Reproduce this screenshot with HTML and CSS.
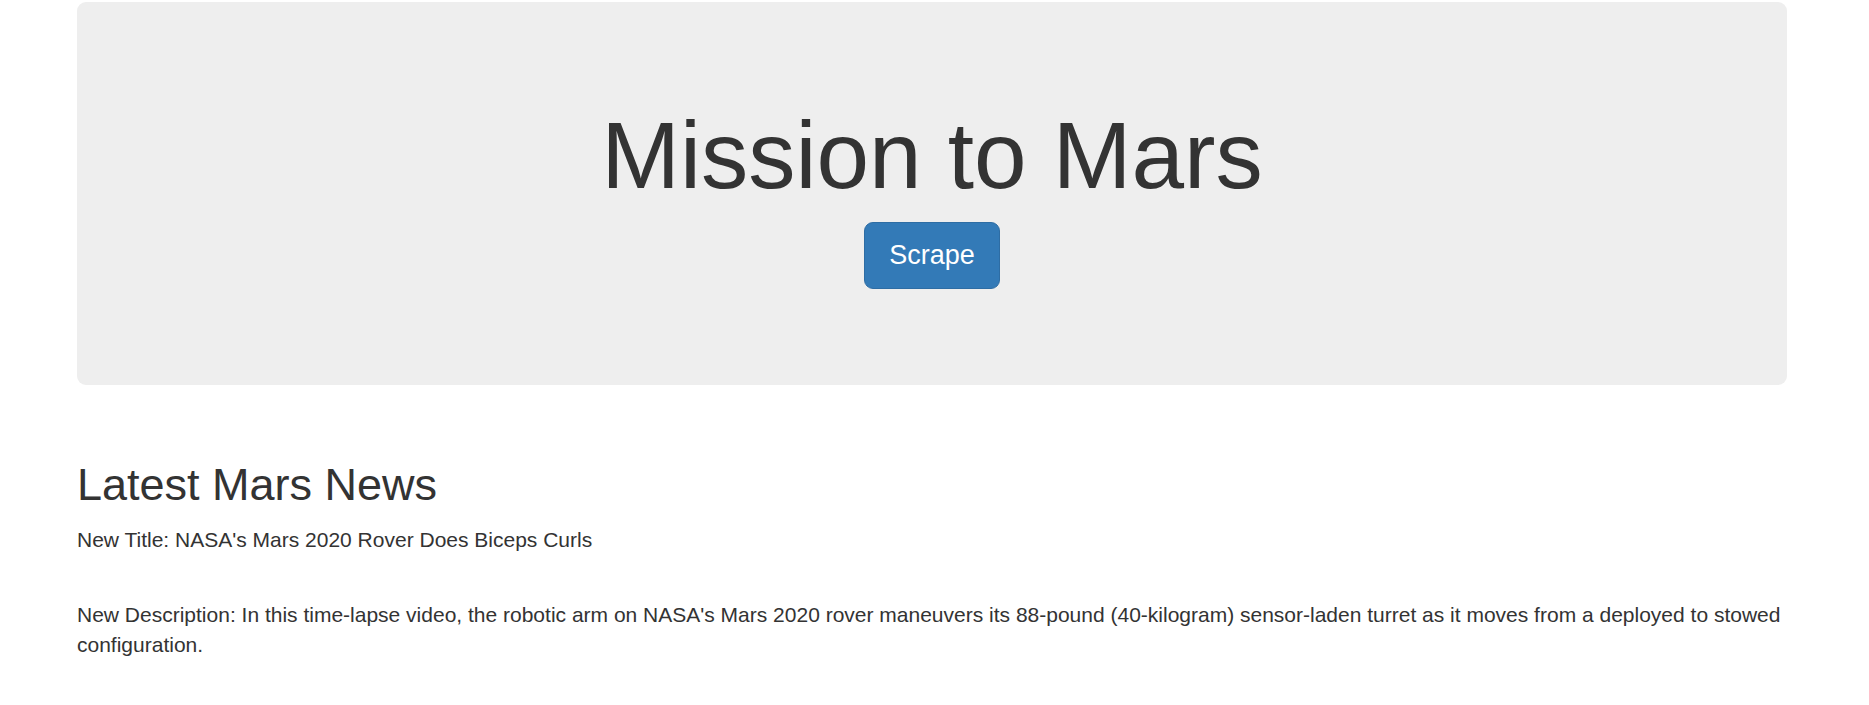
FILE: index.html
```html
<!DOCTYPE html>
<html lang="en">
<head>
<meta charset="utf-8">
<title>Mission to Mars</title>
<link rel="stylesheet" href="styles.css">
</head>
<body>
<div class="container">
  <div class="jumbotron">
    <h1 class="title">Mission to Mars</h1>
    <a class="btn" href="#">Scrape</a>
  </div>
  <section class="news">
    <h2 class="news-heading">Latest Mars News</h2>
    <p class="news-title">New Title: NASA's Mars 2020 Rover Does Biceps Curls</p>
    <p class="news-desc">New Description: In this time-lapse video, the robotic arm on NASA's Mars 2020 rover maneuvers its 88-pound (40-kilogram) sensor-laden turret as it moves from a deployed to stowed configuration.</p>
  </section>
</div>
</body>
</html>
```

FILE: styles.css
```css
html, body {
  margin: 0;
  padding: 0;
  background: #fff;
}
body {
  font-family: "Liberation Sans", Arial, Helvetica, sans-serif;
  font-size: 21px;
  line-height: 30px;
  color: #333;
}
.container {
  width: 1710px;
  margin-left: 77px;
  padding-top: 2px;
}
.jumbotron {
  background: #eeeeee;
  border-radius: 9px;
  padding: 101px 0 96px;
  display: flex;
  flex-direction: column;
  align-items: center;
}
.title {
  margin: 0;
  font-size: 94.5px;
  line-height: 104px;
  font-weight: 400;
  color: #333;
}
.btn {
  display: block;
  margin-top: 15px;
  padding: 15px 24px;
  font-size: 27px;
  line-height: 35px;
  color: #fff;
  background: #337ab7;
  border: 1px solid #2e6da4;
  border-radius: 9px;
  text-decoration: none;
}
.news {
  padding-top: 75px;
}
.news-heading {
  margin: 0 0 15px;
  font-size: 45px;
  line-height: 49.5px;
  font-weight: 400;
  color: #333;
}
.news-title {
  margin: 0 0 45px;
}
.news-desc {
  margin: 0;
}
```
